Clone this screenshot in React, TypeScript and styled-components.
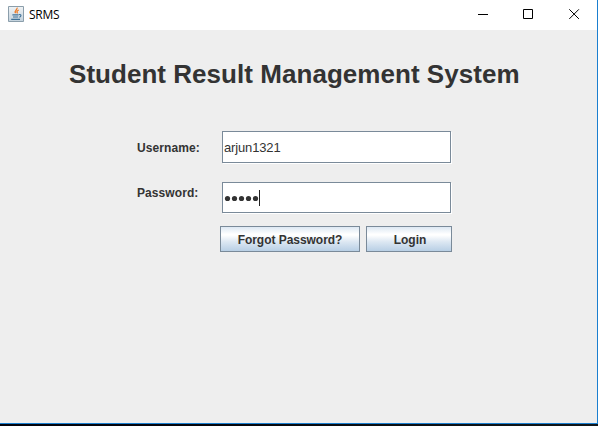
import React from "react";
import styled, { createGlobalStyle } from "styled-components";

const GlobalStyle = createGlobalStyle`
  * { box-sizing: border-box; }
  body { margin: 0; background: #05070b; overflow: hidden; }
`;

const Desktop = styled.div`
  width: 598px;
  height: 426px;
  background: linear-gradient(90deg, #02030c 0%, #05070d 40%, #0a0e12 60%, #10171a 100%);
  font-family: "Liberation Sans", Arial, sans-serif;
  color: #333;
`;

const Window = styled.div`
  display: flex;
  flex-direction: column;
  height: 424px;
  background: #eee;
  border-right: 1px solid #1a7fd0;
  border-bottom: 1px solid #1a7fd0;
`;

const TitleBar = styled.header`
  display: flex;
  align-items: center;
  height: 30px;
  flex: none;
  padding-left: 8px;
  background: #fff;
`;

const AppIcon = styled.svg`
  width: 16px;
  height: 16px;
  margin-top: -2px;
`;

const WindowName = styled.span`
  flex: 1;
  margin-left: 5px;
  font: 12px/16px "Open Sans", "Noto Sans", sans-serif;
  letter-spacing: -0.25px;
  color: #000;
`;

const CaptionButton = styled.button`
  display: flex;
  width: 46px;
  height: 30px;
  padding: 9px 0 0 18px;
  border: 0;
  background: none;
`;

const CaptionGlyph = styled.svg`
  width: 11px;
  height: 11px;
  fill: none;
  stroke: #000;
`;

const Content = styled.main`
  display: flex;
  flex-direction: column;
`;

const Heading = styled.h1`
  margin: 27px 0 0 69px;
  height: 34px;
  font-size: 26px;
  line-height: 34px;
  font-weight: bold;
  letter-spacing: 0.04px;
  white-space: nowrap;
`;

const Form = styled.form`
  display: grid;
  grid-template-columns: 85px 230px;
  row-gap: 19px;
  margin: 40px 0 0 137px;
`;

const Label = styled.label<{ $top: number }>`
  padding-top: ${(p) => p.$top}px;
  font-size: 12px;
  line-height: 16px;
  font-weight: bold;
  letter-spacing: 0.08px;
`;

const Field = styled.div<{ $height: number }>`
  display: flex;
  align-items: center;
  width: 229px;
  height: ${(p) => p.$height}px;
  padding-left: 1px;
  border: 1px solid #7a8a99;
  box-shadow: 1px 1px 0 #fff;
  background: #fff;
`;

const Input = styled.input`
  width: 220px;
  height: 20px;
  margin: 2px 0 0;
  padding: 0;
  border: 0;
  outline: 0;
  background: none;
  font: 13px/20px "Liberation Sans", Arial, sans-serif;
  letter-spacing: -0.15px;
  color: #333;
`;

const Mask = styled.svg`
  width: 36px;
  height: 16px;
  fill: #333;
`;

const Actions = styled.div`
  display: flex;
  gap: 6px;
  margin: 13px 0 0 220px;
`;

const Button = styled.button<{ $width: number; $inset: number }>`
  width: ${(p) => p.$width}px;
  height: 26px;
  padding: 1px 0 0 ${(p) => p.$inset}px;
  border: 1px solid #7a8a99;
  background: linear-gradient(#dde8f3 0%, #fff 30%, #fff 34%, #dce7f2 62%, #b8cfe5 100%);
  color: #333;
  font: bold 12px/16px "Liberation Sans", Arial, sans-serif;
  letter-spacing: -0.04px;
`;

function JavaIcon() {
  return (
    <AppIcon viewBox="0 0 16 16">
      <defs>
        <linearGradient id="tile" x2="0" y2="1">
          <stop stopColor="#f0f3f5" />
          <stop offset="1" stopColor="#c3d2dd" />
        </linearGradient>
      </defs>
      <path d="M.5.5h15v15H.5z" fill="url(#tile)" stroke="#8b9eab" />
      <path d="M9 1.6c1 2-3.4 3.2-1.4 5.6M10.8 4c-2.5 1.2-2 2-1.2 3.4" fill="none" stroke="#ee7c28" strokeWidth="1.3" />
      <path d="M4.4 8.9h6.2M5 11h5.2M3.2 13.4h8.8M11 8.7c2.7-.8 2.4 2 .3 2.5" fill="none" stroke="#3f7299" strokeWidth="1.1" />
    </AppIcon>
  );
}

const captions = [
  { name: "Minimize", path: "M1 5.5h10" },
  { name: "Maximize", path: "M.5.5h9v9h-9z" },
  { name: "Close", path: "M.3.3l9.6 9.6M9.9.3L.3 9.9" },
];

export default function App() {
  return (
    <Desktop>
      <GlobalStyle />
      <Window>
        <TitleBar>
          <JavaIcon />
          <WindowName>SRMS</WindowName>
          {captions.map((c) => (
            <CaptionButton key={c.name} aria-label={c.name}>
              <CaptionGlyph viewBox="0 0 11 11"><path d={c.path} /></CaptionGlyph>
            </CaptionButton>
          ))}
        </TitleBar>
        <Content>
          <Heading>Student Result Management System</Heading>
          <Form>
            <Label $top={9}>Username:</Label>
            <Field $height={32}>
              <Input defaultValue="arjun1321" aria-label="Username" />
            </Field>
            <Label $top={3}>Password:</Label>
            <Field $height={31}>
              <Mask viewBox="0 0 36 16" role="img" aria-label="Password">
                {[3.5, 10.5, 17.5, 24.5, 31.5].map((x) => (
                  <circle key={x} cx={x} cy="8.5" r="2.6" />
                ))}
                <path d="M35 0h1v16h-1z" fill="#222" />
              </Mask>
            </Field>
          </Form>
          <Actions>
            <Button $width={140} $inset={0}>Forgot Password?</Button>
            <Button $width={86} $inset={2}>Login</Button>
          </Actions>
        </Content>
      </Window>
    </Desktop>
  );
}
